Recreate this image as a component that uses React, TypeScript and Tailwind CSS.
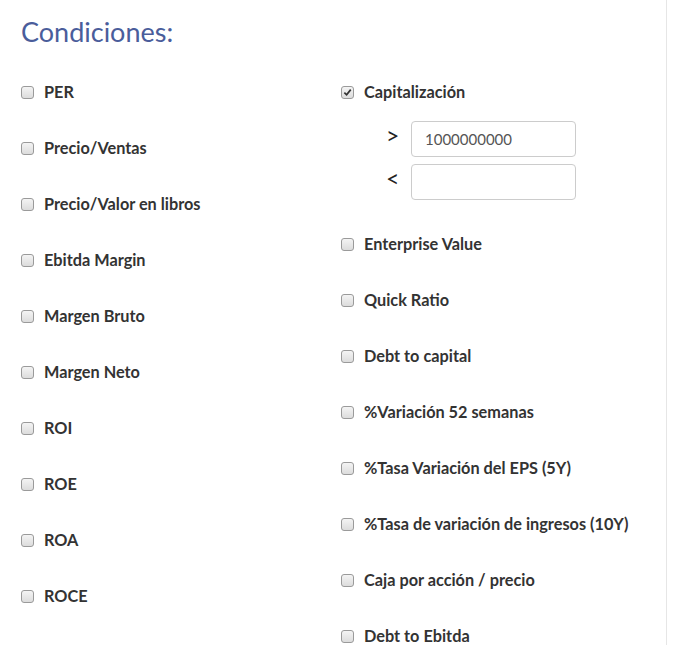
import type { ReactNode } from "react";

const leftItems = [
	"PER",
	"Precio/Ventas",
	"Precio/Valor en libros",
	"Ebitda Margin",
	"Margen Bruto",
	"Margen Neto",
	"ROI",
	"ROE",
	"ROA",
	"ROCE",
];

const rightItems = [
	"Enterprise Value",
	"Quick Ratio",
	"Debt to capital",
	"%Variación 52 semanas",
	"%Tasa Variación del EPS (5Y)",
	"%Tasa de variación de ingresos (10Y)",
	"Caja por acción / precio",
	"Debt to Ebitda",
];

function Box({ checked }: { checked?: boolean }) {
	return (
		<span className="w-[13px] h-[13px] flex-shrink-0 rounded-[3px] border border-[#9a9a9a] bg-gradient-to-b from-[#f4f4f4] to-[#dcdcdc] flex items-center justify-center">
			{checked && (
				<svg width="9" height="9" viewBox="0 0 10 10">
					<path d="M1.5 5.2 L4 7.6 L8.6 1.8" fill="none" stroke="#333" strokeWidth="1.9" />
				</svg>
			)}
		</span>
	);
}

function Row({ label, checked }: { label: string; checked?: boolean }): ReactNode {
	return (
		<div className="h-14 flex items-center gap-[10px]">
			<Box checked={checked} />
			<span className="text-[16.3px] font-bold text-[#333]">{label}</span>
		</div>
	);
}

export default function App() {
	return (
		<div className="w-[678px] h-[645px] overflow-hidden bg-white font-['Lato',sans-serif]">
			<div className="w-[667px] h-full border-r border-[#e6e6e6] pl-[21px]">
				<h1 className="h-16 pt-[16px] text-[27px] leading-8 text-[#4a5d9b]">Condiciones:</h1>
				<div className="flex">
					<div className="w-[320px]">
						{leftItems.map((l) => (
							<Row key={l} label={l} />
						))}
					</div>
					<div className="flex-1">
						<Row label="Capitalización" checked />
						<div className="pl-[45px] pt-px pb-4 flex flex-col gap-[7px]">
							<div className="flex items-center">
								<span className="w-[25px] text-[23px] leading-none text-[#222] -mt-2">&gt;</span>
								<div className="w-[165px] h-9 rounded border border-[#ccc] px-[13px] flex items-center text-[15px] text-[#555]">
									1000000000
								</div>
							</div>
							<div className="flex items-center">
								<span className="w-[25px] text-[23px] leading-none text-[#222] -mt-2">&lt;</span>
								<div className="w-[165px] h-9 rounded border border-[#ccc]" />
							</div>
						</div>
						{rightItems.map((l) => (
							<Row key={l} label={l} />
						))}
					</div>
				</div>
			</div>
		</div>
	);
}
